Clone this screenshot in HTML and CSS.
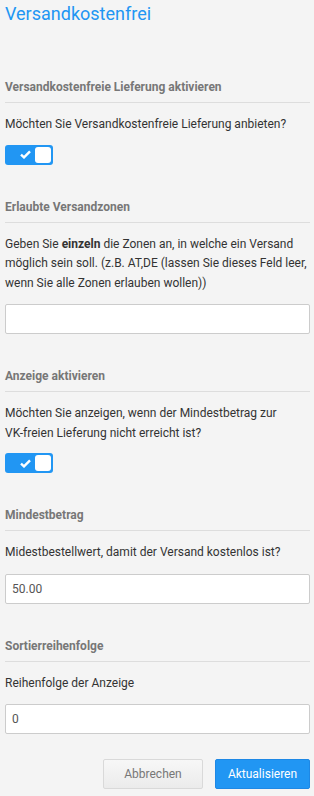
FILE: index.html
```html
<!DOCTYPE html>
<html lang="de">
<head>
<meta charset="utf-8">
<link rel="stylesheet" href="styles.css">
</head>
<body>
<div class="page">
  <h1 class="title">Versandkostenfrei</h1>

  <section class="section first">
    <h2 class="section-title">Versandkostenfreie Lieferung aktivieren</h2>
    <p class="desc">Möchten Sie Versandkostenfreie Lieferung anbieten?</p>
    <div class="toggle">
      <svg class="check" width="11" height="9" viewBox="0 0 11 9"><path d="M1 4.6 L4 7.4 L10 1.4" fill="none" stroke="#fff" stroke-width="2.4"/></svg>
      <span class="knob"></span>
    </div>
  </section>

  <section class="section">
    <h2 class="section-title">Erlaubte Versandzonen</h2>
    <p class="desc">Geben Sie <b>einzeln</b> die Zonen an, in welche ein Versand möglich sein soll. (z.B. AT,DE (lassen Sie dieses Feld leer, wenn Sie alle Zonen erlauben wollen))</p>
    <input class="field" type="text" value="">
  </section>

  <section class="section">
    <h2 class="section-title">Anzeige aktivieren</h2>
    <p class="desc">Möchten Sie anzeigen, wenn der Mindestbetrag zur <span class="nowrap">VK-freien</span> Lieferung nicht erreicht ist?</p>
    <div class="toggle">
      <svg class="check" width="11" height="9" viewBox="0 0 11 9"><path d="M1 4.6 L4 7.4 L10 1.4" fill="none" stroke="#fff" stroke-width="2.4"/></svg>
      <span class="knob"></span>
    </div>
  </section>

  <section class="section">
    <h2 class="section-title">Mindestbetrag</h2>
    <p class="desc">Midestbestellwert, damit der Versand kostenlos ist?</p>
    <input class="field" type="text" value="50.00">
  </section>

  <section class="section">
    <h2 class="section-title">Sortierreihenfolge</h2>
    <p class="desc">Reihenfolge der Anzeige</p>
    <input class="field" type="text" value="0">
  </section>

  <div class="actions">
    <button class="btn btn-cancel" type="button">Abbrechen</button>
    <button class="btn btn-primary" type="button">Aktualisieren</button>
  </div>
</div>
</body>
</html>
```

FILE: styles.css
```css
html, body {
  margin: 0;
  padding: 0;
  background: #f4f4f4;
}
body {
  font-family: Roboto, "Noto Sans", Arial, sans-serif;
  color: #333;
}
.page {
  padding: 0 4px 0 5px;
}
.title {
  margin: 0;
  font-size: 18px;
  font-weight: 400;
  line-height: 28px;
  color: #2196f3;
}
.section {
  margin-top: 32px;
}
.section.first {
  margin-top: 49px;
}
.section-title {
  margin: 0;
  font-size: 12px;
  font-weight: 700;
  line-height: 20px;
  color: #777;
  padding-bottom: 5px;
  border-bottom: 1px solid #ddd;
}
.desc {
  margin: 12px 0 0;
  font-size: 12px;
  line-height: 19.5px;
  color: #333;
}
.desc b {
  font-weight: 700;
}
.nowrap {
  white-space: nowrap;
}
.toggle {
  margin-top: 10px;
  width: 48px;
  height: 20px;
  border-radius: 3px;
  background: #2196f3;
  display: flex;
  align-items: center;
  justify-content: space-between;
  padding: 0 2px 0 15px;
  box-sizing: border-box;
}
.check {
  display: block;
}
.knob {
  width: 16px;
  height: 16px;
  border-radius: 3px;
  background: #fff;
}
.field {
  display: block;
  box-sizing: border-box;
  width: 100%;
  height: 30px;
  margin-top: 11px;
  border: 1px solid #ccc;
  border-radius: 2px;
  background: #fff;
  padding: 0 6px;
  font-family: inherit;
  font-size: 12px;
  color: #555;
  outline: none;
}
.actions {
  display: flex;
  justify-content: flex-end;
  gap: 12px;
  margin-top: 25px;
}
.btn {
  height: 30px;
  border-radius: 2px;
  font-family: inherit;
  font-size: 12px;
  padding: 0;
  cursor: pointer;
}
.btn-cancel {
  width: 100px;
  background: linear-gradient(#f7f7f7, #ebebeb);
  border: 1px solid #d9d9d9;
  color: #777;
}
.btn-primary {
  width: 95px;
  background: #2196f3;
  border: 1px solid #1e88e5;
  color: #fff;
}
```
